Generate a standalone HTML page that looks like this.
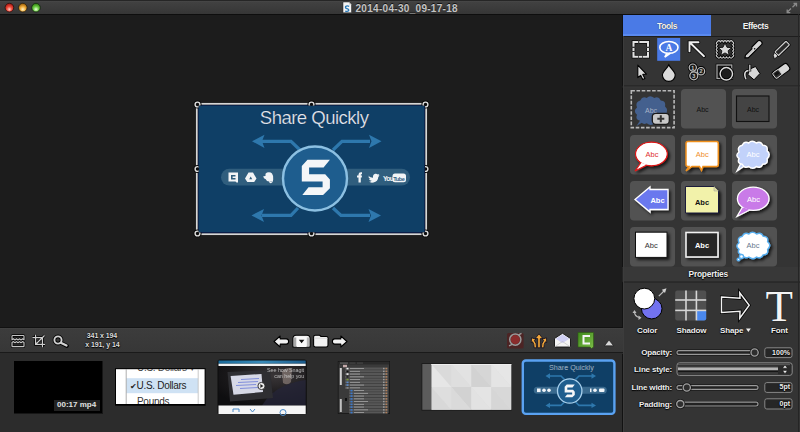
<!DOCTYPE html>
<html><head><meta charset="utf-8">
<style>
*{margin:0;padding:0;box-sizing:border-box}
html,body{width:800px;height:432px;overflow:hidden;background:#1c1c1c;font-family:"Liberation Sans",sans-serif}
.a{position:absolute;white-space:nowrap}
#title{left:0;top:0;width:800px;height:15px;background:linear-gradient(#262626 0,#262626 1px,#4a4a4a 1px,#414141 2px,#363636 14px);border-bottom:1px solid #0e0e0e}
#ttext{left:355.5px;top:3px;font-size:10px;line-height:11px;color:#c4c4c4;font-weight:bold;letter-spacing:.3px;text-shadow:0 -1px 0 #111}
#panel{left:622px;top:15px;width:178px;height:417px;background:#343434;border-left:1px solid #121212}
#tabT{left:623px;top:15px;width:88px;height:21px;background:linear-gradient(#4a7ae6 0,#4a7ae6 19px,#5a8af0 19px);color:#f4f4f4;font-size:8.6px;letter-spacing:-.45px;font-weight:bold;text-align:center;line-height:22.5px;text-shadow:0 0 1px #222}
#tabE{left:711px;top:15px;width:89px;height:21px;background:#363636;color:#f4f4f4;font-size:8.6px;letter-spacing:-.45px;font-weight:bold;text-align:center;line-height:22.5px;text-shadow:0 0 1px #000}
#toolbar{left:0;top:327px;width:623px;height:27px;background:linear-gradient(#111 0,#111 1px,#454545 1px,#3c3c3c 2px,#373737 25px,#1a1a1a 25px,#1a1a1a 26px,#2c2c2c 26px)}
#strip{left:0;top:353px;width:622px;height:79px;background:#2c2c2c}
#svg{left:0;top:0}
.lbl{font-size:8px;font-weight:bold;color:#eee;text-shadow:0 0 1.5px #000,0 1px 1px #000}
</style></head><body>
<div id="title" class="a"></div>
<div id="ttext" class="a">2014-04-30_09-17-18</div>
<div id="panel" class="a"></div>
<div id="tabT" class="a">Tools</div>
<div id="tabE" class="a">Effects</div>
<div id="toolbar" class="a"></div>
<div id="strip" class="a"></div>

<svg id="svg" class="a" width="800" height="432" viewBox="0 0 800 432">
<defs>
 <radialGradient id="gr" cx="50%" cy="70%" r="60%"><stop offset="0" stop-color="#ffd0c8"/><stop offset=".5" stop-color="#f04a3a"/><stop offset="1" stop-color="#b02018"/></radialGradient>
 <radialGradient id="gy" cx="50%" cy="70%" r="60%"><stop offset="0" stop-color="#fff4c8"/><stop offset=".5" stop-color="#f2b040"/><stop offset="1" stop-color="#a86a10"/></radialGradient>
 <radialGradient id="gg" cx="50%" cy="70%" r="60%"><stop offset="0" stop-color="#f0ffe0"/><stop offset=".5" stop-color="#70d048"/><stop offset="1" stop-color="#3a8a18"/></radialGradient>
</defs>
<!-- traffic lights -->
<circle cx="9.4" cy="7.6" r="4.3" fill="url(#gr)" stroke="#1a0a0a" stroke-width=".7"/>
<circle cx="22.8" cy="7.6" r="4.3" fill="url(#gy)" stroke="#1a140a" stroke-width=".7"/>
<circle cx="36" cy="7.6" r="4.3" fill="url(#gg)" stroke="#0a1a0a" stroke-width=".7"/>

<!-- fullscreen -->
 <path d="M792.5,7.2 L796,3.7 M793.5,3.5 H796.5 V6.5" fill="none" stroke="#8a8a8a" stroke-width="1.3"/>
 <path d="M791,8.5 L787.5,12 M787.2,9.5 V12.6 H790.3" fill="none" stroke="#8a8a8a" stroke-width="1.3"/>
 <line x1="623" y1="36.5" x2="800" y2="36.5" stroke="#1e1e1e" stroke-width="1"/>
<!-- doc icon -->
 <path d="M343,2 H349 L351.5,4.5 V12.7 H343Z" fill="#f4f4f4" stroke="#222" stroke-width=".5"/>
 <path d="M349,2 V4.5 H351.5" fill="#ccc"/>
 <path d="M349.2,6.3 Q347,5.2 345.6,6.5 Q345,8 347,8.6 Q349.2,9.3 348.6,10.8 Q347.2,12 345.2,11" fill="none" stroke="#2a7ab8" stroke-width="1.3"/>
<!-- ===== canvas image ===== -->
<g id="canvasimg">
 <rect x="198" y="105" width="227" height="128" fill="#0f3f66"/>
 <rect x="198" y="232" width="227" height="1.5" fill="#0a1d4a"/>
 <g fill="none" stroke="#2e78ad" stroke-width="3.2" stroke-linejoin="miter">
  <polyline points="262,141.3 291,141.3 300,150"/>
  <polyline points="370,141.3 342,141.3 333,150"/>
  <polyline points="262,215.4 291,215.4 298,208"/>
  <polyline points="370,215.4 341,215.4 333,208"/>
 </g>
 <g fill="#2e78ad">
  <polygon points="252,141.3 264.5,134.8 262,141.3 264.5,148"/>
  <polygon points="381.5,141.3 369,134.8 371.5,141.3 369,148"/>
  <polygon points="251.5,215.4 264,209 261.5,215.4 264,222"/>
  <polygon points="381,215.4 368.5,209 371,215.4 368.5,222"/>
 </g>
 <rect x="221" y="168.8" width="189" height="16.8" rx="8.4" fill="#305e7e"/>
<!-- social -->
 <g fill="#f2f4f6">
  <path d="M228.5,172.5 H238 V182.5 H236.5 L235.5,181.5 H228.5Z M231,175 V179.5 H235.5 V178 H232.6 V176.5 H235.5 V175Z" fill-rule="evenodd"/>
  <path d="M248.5,172.5 H253 L256.5,178.5 L254.2,182 H247.3 L245,178.5Z M250.7,176.5 L249.2,179.3 H252.2Z" fill-rule="evenodd"/>
  <path d="M265.5,173.8 L267,172.5 Q270.5,171.8 272,173.5 Q273.8,176 273.2,179.5 Q272.8,183 270.6,183.2 Q269,183.2 269.2,181.5 Q266.5,181.5 265.8,179.2 Q263.5,178.6 263.2,176.3 L265.5,176Z"/><path d="M270.6,181.5 Q271.5,181.2 271.5,182.2" fill="none" stroke="#305e7e" stroke-width=".6"/>
  <path d="M358.5,182.5 V177.5 H357 V175.5 H358.5 V174.5 Q358.5,172.2 361,172.2 H362 V174.2 H361.3 Q360.8,174.2 360.8,174.8 V175.5 H362 L361.8,177.5 H360.8 V182.5Z"/>
  <path d="M368,175.5 Q370.5,177.8 373,177.8 Q372.6,174.5 375.3,173.8 Q377,173.6 377.8,174.6 L379.3,174 L378.5,175.4 L379.5,175.2 Q379,176.5 378.3,177 Q378,181.5 373.5,182.5 Q370.5,183 368.5,181.6 Q370.5,181.8 371.7,180.8 Q369.5,180.5 369,179 L370.3,179 Q368.4,178.2 368.5,176.6 L369.6,177 Q368.2,175.8 368,175.5Z"/>
  <rect x="392.5" y="173.5" width="13.5" height="8.8" rx="2.5"/>
 </g>
 <text x="383" y="181" font-size="6.8" font-weight="bold" fill="#f2f4f6" letter-spacing="-0.7">You</text>
 <text x="393.3" y="180.6" font-size="5.6" font-weight="bold" fill="#305e7e" letter-spacing="-0.5">Tube</text>
 <circle cx="315" cy="178.5" r="32" fill="#1e5d8e" stroke="#8cc0e2" stroke-width="2.4"/>
 <polygon fill="#f4f6f8" points="307.5,159.7 329.9,159.7 323.6,167.5 309.1,167.5 309.1,174.3 325.2,174.3 329.9,179.5 329.9,188.3 323.1,195.1 302.3,195.1 308.5,187.3 322.6,187.3 322.6,181.6 301.8,181.6 301.8,165.9"/>
</g>

<!-- ===== tools icons ===== -->
<g id="tools">
 <rect x="657.2" y="38" width="23" height="22.8" fill="#4a7ae6"/>
 <line x1="622.5" y1="86" x2="800" y2="86" stroke="#1e1e1e" stroke-width="1"/>
 <line x1="622.5" y1="87" x2="800" y2="87" stroke="#383838" stroke-width="1"/>
 <!-- dashed rect -->
 <g fill="none" stroke-linecap="butt">
  <g stroke="#000" stroke-width="3.6" opacity=".85">
   <path d="M633.5,46.8V42H638.2M643.3,42H639.3M642.8,42H648V46.8M648,47.9V50.9M648,52V56.8H643M642.3,56.8H638.9M638.2,56.8H633.5V52M633.5,50.9V47.9"/>
  </g>
  <g stroke="#e2e2e2" stroke-width="2.1">
   <path d="M633.5,46.8V42H638.2M643.3,42H639.3M642.8,42H648V46.8M648,47.9V50.9M648,52V56.8H643M642.3,56.8H638.9M638.2,56.8H633.5V52M633.5,50.9V47.9"/>
  </g>
 </g>
 <!-- callout -->
 <g fill="none" stroke="#fff" stroke-width="1.6">
  <ellipse cx="668.9" cy="47.4" rx="9.1" ry="5.9"/>
  <path d="M667,53.2 L664.8,57.2 L670.5,53"/>
 </g>
 <text x="668.9" y="51.4" font-family="Liberation Serif" font-weight="bold" font-size="9.5" fill="#fff" text-anchor="middle">A</text>
 <!-- arrow -->
 <g fill="none" stroke-linecap="round" stroke-linejoin="miter">
  <path d="M689.5,51.2V42.2H698.5M689.8,42.5L704,56.2" stroke="#000" stroke-width="3.6" opacity=".9"/>
  <path d="M689.5,51.2V42.2H698.5M689.8,42.5L704,56.2" stroke="#eee" stroke-width="1.9"/>
 </g>
 <!-- stamp -->
 <g fill="none">
  <path d="M717.4,41.8 Q718.92,39.60 720.44,41.80 Q721.96,39.60 723.48,41.80 Q725.00,39.60 726.52,41.80 Q728.04,39.60 729.56,41.80 Q731.08,39.60 732.60,41.80 Q734.80,43.32 732.60,44.84 Q734.80,46.36 732.60,47.88 Q734.80,49.40 732.60,50.92 Q734.80,52.44 732.60,53.96 Q734.80,55.48 732.60,57.00 Q731.08,59.20 729.56,57.00 Q728.04,59.20 726.52,57.00 Q725.00,59.20 723.48,57.00 Q721.96,59.20 720.44,57.00 Q718.92,59.20 717.40,57.00 Q715.20,55.48 717.40,53.96 Q715.20,52.44 717.40,50.92 Q715.20,49.40 717.40,47.88 Q715.20,46.36 717.40,44.84 Q715.20,43.32 717.40,41.80Z" stroke="#000" stroke-width="2.8"/>
  <path d="M717.4,41.8 Q718.92,39.60 720.44,41.80 Q721.96,39.60 723.48,41.80 Q725.00,39.60 726.52,41.80 Q728.04,39.60 729.56,41.80 Q731.08,39.60 732.60,41.80 Q734.80,43.32 732.60,44.84 Q734.80,46.36 732.60,47.88 Q734.80,49.40 732.60,50.92 Q734.80,52.44 732.60,53.96 Q734.80,55.48 732.60,57.00 Q731.08,59.20 729.56,57.00 Q728.04,59.20 726.52,57.00 Q725.00,59.20 723.48,57.00 Q721.96,59.20 720.44,57.00 Q718.92,59.20 717.40,57.00 Q715.20,55.48 717.40,53.96 Q715.20,52.44 717.40,50.92 Q715.20,49.40 717.40,47.88 Q715.20,46.36 717.40,44.84 Q715.20,43.32 717.40,41.80Z" stroke="#c8c8c8" stroke-width="1.2"/>
 </g>
 <polygon points="725,43 727,47.3 731.6,47.7 728.1,50.8 729.2,55.3 725,52.9 720.8,55.3 721.9,50.8 718.4,47.7 723,47.3" fill="#d8d8d8" stroke="#000" stroke-width=".8" stroke-linejoin="round"/>
 <!-- pen -->
 <g transform="translate(752.8,49.7) rotate(-44.5)">
  <path d="M-11.3,0.3 L-9,-1.3 H0 L1.2,-2.6 H9.8 Q11.8,-2.6 11.8,0 Q11.8,2.6 9.8,2.6 H-9 Z" fill="#d6d6d6" stroke="#000" stroke-width="1.1"/>
  <line x1="-8" y1="0" x2="0" y2="0" stroke="#999" stroke-width=".6"/>
  <circle cx="2" cy="0.6" r=".8" fill="#111"/>
 </g>
 <!-- highlighter -->
 <g transform="translate(782.2,48.4) rotate(-44)">
  <rect x="-7.8" y="-2.5" width="15.6" height="5" rx=".9" fill="#2a2a2a" stroke="#000" stroke-width="2.8"/>
  <rect x="-7.8" y="-2.5" width="15.6" height="5" rx=".9" fill="#2a2a2a" stroke="#cdcdcd" stroke-width="1.3"/>
  <path d="M-8.4,-2.4 L-11.2,-1.2 L-13,2.2 L-8.4,2.6Z" fill="#dcdcdc" stroke="#000" stroke-width=".7"/>
 </g>
 <!-- cursor -->
 <path d="M637.8,65.2 L637.8,77.6 L640.6,75.3 L642.7,79.6 L644.9,78.6 L642.8,74.4 L646.4,74.2Z" fill="#dadada" stroke="#000" stroke-width="1.1" stroke-linejoin="round"/>
 <!-- drop -->
 <path d="M668.8,64.8 C670.4,68.5 675.2,71.2 675.2,75 A6.4,6.4 0 0 1 662.4,75 C662.4,71.2 667.2,68.5 668.8,64.8Z" fill="#dadada" stroke="#000" stroke-width="1.1"/>
 <!-- step numbers -->
 <g fill="#1a1a1a" stroke="#000" stroke-width="2.8">
  <circle cx="701" cy="71.2" r="3.7"/><circle cx="692.8" cy="67.6" r="3.6"/><circle cx="693.8" cy="75.8" r="4"/>
 </g>
 <g fill="#1a1a1a" stroke="#bdbdbd" stroke-width="1.2">
  <circle cx="701" cy="71.2" r="3.7"/>
  <circle cx="692.8" cy="67.6" r="3.6"/>
  <circle cx="693.8" cy="75.8" r="4"/>
 </g>
 <g font-family="Liberation Sans" font-weight="bold" font-size="5.5" fill="#c8c8c8" text-anchor="middle">
  <text x="692.8" y="69.6">1</text><text x="701.1" y="73.2">2</text><text x="693.8" y="77.8">3</text>
 </g>
 <!-- crop circle -->
 <rect x="717" y="65" width="14.8" height="13.4" fill="#1e1e1e" stroke="#000" stroke-width="2.6"/>
 <rect x="717" y="65" width="14.8" height="13.4" fill="none" stroke="#a8a8a8" stroke-width="1.3"/>
 <circle cx="726.3" cy="73.8" r="6.2" fill="#1e1e1e" stroke="#000" stroke-width="3"/>
 <circle cx="726.3" cy="73.8" r="6.2" fill="none" stroke="#dcdcdc" stroke-width="1.5"/>
 <!-- bucket -->
 <g>
  <path d="M750,69 L755.5,66.5 L760,73.5 L754,79.8 L747.8,74.5Z" fill="#d8d8d8" stroke="#000" stroke-width="1"/>
  <line x1="749.8" y1="64.3" x2="749.8" y2="71.5" stroke="#000" stroke-width="2.8"/>
  <line x1="749.8" y1="64.8" x2="749.8" y2="71.5" stroke="#c8c8c8" stroke-width="1.4"/>
  <path d="M748.5,70.5 Q744.5,71 744.8,75 Q745,77.5 746,79" fill="none" stroke="#000" stroke-width="3"/>
  <path d="M748.5,70.5 Q744.5,71 744.8,75 Q745,77.5 746,79" fill="none" stroke="#d8d8d8" stroke-width="1.6"/>
 </g>
 <!-- eraser -->
 <g transform="translate(781,71.2) rotate(-36)">
  <rect x="-9.2" y="-4.1" width="18.4" height="8.2" rx="2.6" fill="#d8d8d8" stroke="#000" stroke-width="1.1"/>
  <rect x="-8.4" y="-3.3" width="7.4" height="6.6" rx="1.4" fill="#2e2e2e" stroke="#d0d0d0" stroke-width=".9"/>
  <rect x="-6.8" y="-1.8" width="4.2" height="2.8" fill="#111"/>
 </g>
</g>
</g>

<!-- ===== styles grid ===== -->
<g id="grid">
 <defs>
  <filter id="sh" x="-30%" y="-30%" width="160%" height="160%"><feGaussianBlur in="SourceAlpha" stdDeviation="1.6"/><feOffset dx="1.5" dy="2" result="b"/><feFlood flood-color="#000" flood-opacity=".75"/><feComposite in2="b" operator="in"/><feMerge><feMergeNode/><feMergeNode in="SourceGraphic"/></feMerge></filter>
  <path id="cloud" d="M0,8 q-2,-5 3,-6 q2,-4 6,-2 q3,-3 7,0 q4,-2 6,2 q5,0 4,5 q4,3 0,7 q1,5 -4,5 q-2,4 -6,2 q-3,3 -7,0 q-4,2 -6,-2 q-5,-1 -3,-5 q-4,-3 0,-6z"/>
 </defs>
 <rect x="681" y="89" width="45" height="39.5" rx="4" fill="#525252"/>
 <rect x="732" y="89" width="45" height="39.5" rx="4" fill="#525252"/>
 <rect x="630" y="135" width="45" height="39.5" rx="4" fill="#525252"/>
 <rect x="681" y="135" width="45" height="39.5" rx="4" fill="#525252"/>
 <rect x="732" y="135" width="45" height="39.5" rx="4" fill="#525252"/>
 <rect x="630" y="181" width="45" height="39.5" rx="4" fill="#525252"/>
 <rect x="681" y="181" width="45" height="39.5" rx="4" fill="#525252"/>
 <rect x="732" y="181" width="45" height="39.5" rx="4" fill="#525252"/>
 <rect x="630" y="227" width="45" height="39.5" rx="4" fill="#525252"/>
 <rect x="681" y="227" width="45" height="39.5" rx="4" fill="#525252"/>
 <rect x="732" y="227" width="45" height="39.5" rx="4" fill="#525252"/>
 <!-- cell1 dashed -->
 <rect x="631.3" y="90.8" width="42.8" height="36.8" fill="none" stroke="#b8b8b8" stroke-width="1.6" stroke-dasharray="3.6 1.6"/>
 <g fill="#44608e">
  <use href="#cloud" transform="translate(637,98) scale(1.08,1.2)"/>
  <path d="M643,116 L636.5,126 L648,119Z"/>
 </g>
 <text x="651" y="112.5" font-size="7" fill="#a8b4c8" text-anchor="middle">Abc</text>
 <rect x="652.3" y="113.3" width="17" height="11" rx="3.5" fill="#c8c8c8" stroke="#1a1a1a" stroke-width="1.3"/>
 <path d="M660.8,115.3V122.3M657.3,118.8H664.3" stroke="#333" stroke-width="2"/>
 <!-- cell2 -->
 <text x="702.5" y="111.5" font-size="7" fill="#111" text-anchor="middle">Abc</text>
 <!-- cell3 -->
 <rect x="736.5" y="96" width="32.5" height="25.5" fill="#444" stroke="#111" stroke-width="1.1"/>
 <text x="753" y="111.5" font-size="7" fill="#111" text-anchor="middle">Abc</text>
 <!-- cell4 red oval -->
 <g filter="url(#sh)">
  <ellipse cx="651.4" cy="154" rx="15.8" ry="11.8" fill="#fff" stroke="#e01818" stroke-width="1.3"/>
  <path d="M641,162.5 L635,171 L647,165" fill="#fff" stroke="#e01818" stroke-width="1.3"/>
  <ellipse cx="651.4" cy="154" rx="15" ry="11" fill="#fff"/>
 </g>
 <text x="652" y="157" font-size="7.5" fill="#e03030" text-anchor="middle">Abc</text>
 <!-- cell5 orange rect -->
 <g filter="url(#sh)">
  <path d="M688,141.5 H716.5 Q718.3,141.5 718.3,143.5 V164.5 Q718.3,166.5 716.5,166.5 H703 L701.5,170.5 L699.5,166.5 H692 L686,171 L689,166.5 H688 Q686,166.5 686,164.5 V143.5 Q686,141.5 688,141.5Z" fill="#fff" stroke="#f0901c" stroke-width="1.5"/>
 </g>
 <text x="702.3" y="157" font-size="7.5" fill="#f0902c" text-anchor="middle">Abc</text>
 <!-- cell6 blue cloud -->
 <g filter="url(#sh)">
  <g fill="#c2d2fa" stroke="#fff" stroke-width="1.3">
   <path d="M742,161 L737,171 L748,163.5Z"/>
   <use href="#cloud" transform="translate(739,143) scale(1.08,1.12)"/>
  </g>
 </g>
 <text x="753" y="157" font-size="7.5" fill="#fff" text-anchor="middle">Abc</text>
 <!-- cell7 blue arrow -->
 <g filter="url(#sh)">
  <path d="M635,199.4 L650,187 V189.5 H668 V209.5 H650 V212 Z" fill="#6b78ee" stroke="#fff" stroke-width="1.3" stroke-linejoin="miter"/>
 </g>
 <text x="657.5" y="202.5" font-size="7.5" font-weight="bold" fill="#fff" text-anchor="middle">Abc</text>
 <!-- cell8 yellow note -->
 <g filter="url(#sh)">
  <path d="M685.5,186.5 H714 L718.5,191 V213 H685.5Z" fill="#f2f2aa" stroke="#1a1a3a" stroke-width="1"/>
  <path d="M714,186.5 V191 H718.5" fill="#e0e0a0" stroke="#999" stroke-width=".5"/>
 </g>
 <text x="702" y="204.5" font-size="7.5" font-weight="bold" fill="#111" text-anchor="middle">Abc</text>
 <!-- cell9 purple oval -->
 <g filter="url(#sh)">
  <path d="M742.5,207 L737,216.5 L749.5,210Z" fill="#c97ae8" stroke="#fff" stroke-width="1.3"/>
  <ellipse cx="753.2" cy="198.8" rx="15.8" ry="11.6" fill="#c97ae8" stroke="#fff" stroke-width="1.3"/>
  <path d="M743.5,207.5 L739,214.5 L749,209.5Z" fill="#c97ae8"/>
 </g>
 <text x="753.5" y="202" font-size="7.5" fill="#fff" text-anchor="middle">Abc</text>
 <!-- cell10 white rect -->
 <g filter="url(#sh)"><rect x="635.5" y="232.2" width="31.5" height="25.2" fill="#fff" stroke="#111" stroke-width="1"/></g>
 <text x="651.3" y="247.5" font-size="7.5" fill="#333" text-anchor="middle">Abc</text>
 <!-- cell11 black rect -->
 <g filter="url(#sh)"><rect x="686" y="232.5" width="32" height="24.5" fill="#262626" stroke="#f2f2f2" stroke-width="1.6"/></g>
 <text x="702" y="247.5" font-size="7.5" font-weight="bold" fill="#fff" text-anchor="middle">Abc</text>
 <!-- cell12 white cloud -->
 <g filter="url(#sh)">
  <g fill="#fff" stroke="#5ab0f0" stroke-width="1.3">
   <use href="#cloud" transform="translate(739,234) scale(1.1,1.1)"/>
   <circle cx="741.5" cy="256.5" r="2"/><circle cx="738.5" cy="259.5" r="1.4"/>
  </g>
 </g>
 <text x="753" y="248" font-size="7.5" fill="#6a7a90" text-anchor="middle">Abc</text>
 <line x1="622.5" y1="267.5" x2="800" y2="267.5" stroke="#1e1e1e" stroke-width="1"/>
</g>

<!-- ===== properties ===== -->
<g id="props">
 <rect x="622.5" y="267" width="178" height="15" fill="#383838"/>
 <line x1="622.5" y1="282" x2="800" y2="282" stroke="#1f1f1f" stroke-width="1"/>
 <line x1="798.5" y1="14" x2="798.5" y2="432" stroke="#252525" stroke-width="1"/>
 <line x1="623.5" y1="36" x2="623.5" y2="432" stroke="#3c3c3c" stroke-width="1"/>
 <!-- color -->
 <circle cx="651.7" cy="308.6" r="10.3" fill="#7272f0" stroke="#000" stroke-width="1"/>
 <circle cx="644.3" cy="298.6" r="10.4" fill="#fff" stroke="#000" stroke-width="1"/>
 <g stroke="#bdbdbd" stroke-width="1.2" fill="none">
  <line x1="658.8" y1="296.2" x2="664.5" y2="290.5"/>
  <path d="M634.5,311.5 Q634.5,316.5 639.5,317.5"/>
 </g>
 <path d="M666.5,288.3 L661.8,289.8 L665,293Z" fill="#cfcfcf"/>
 <path d="M641.5,317.8 L638.5,315.5 L638.5,320Z" fill="#bdbdbd"/>
 <path d="M634.5,310 L632.5,313 L636.5,313Z" fill="#bdbdbd"/>
 <!-- shadow -->
 <rect x="675.2" y="290.6" width="31" height="29.8" rx="2" fill="#505050"/>
 <path d="M697,311 H706.2 V318.4 Q706.2,320.4 704.2,320.4 H697Z" fill="#4a88ee"/>
 <g stroke="#d6d6d6" stroke-width="1.6">
  <line x1="686" y1="290.6" x2="686" y2="320.4"/>
  <line x1="696.4" y1="290.6" x2="696.4" y2="320.4"/>
  <line x1="675.2" y1="300" x2="706.2" y2="300"/>
  <line x1="675.2" y1="310.4" x2="706.2" y2="310.4"/>
 </g>
 <!-- shape arrow -->
 <path d="M721.5,297 L740,298.3 L739.8,292.8 L749.2,305.3 L739.8,318.2 L740,311.2 L721.5,312.5Z" fill="none" stroke="#000" stroke-width="3" stroke-linejoin="miter"/>
 <path d="M721.5,297 L740,298.3 L739.8,292.8 L749.2,305.3 L739.8,318.2 L740,311.2 L721.5,312.5Z" fill="none" stroke="#f2f2f2" stroke-width="1.5" stroke-linejoin="miter"/>
 <path d="M746,328.5 H750.8 L748.4,332Z" fill="#eee"/>
 <!-- sliders -->
 <g stroke="#111" stroke-width="2.6" fill="none" opacity=".7">
  <rect x="677" y="350.6" width="81" height="3.8" rx="1.9"/>
  <rect x="677" y="385.6" width="81" height="3.8" rx="1.9"/>
  <rect x="677" y="402.2" width="81" height="3.8" rx="1.9"/>
 </g>
 <g stroke="#999" stroke-width="1.2" fill="#222">
  <rect x="677" y="350.6" width="81" height="3.8" rx="1.9"/>
  <rect x="677" y="385.6" width="81" height="3.8" rx="1.9"/>
  <rect x="677" y="402.2" width="81" height="3.8" rx="1.9"/>
 </g>
 <g fill="none" stroke="#111" stroke-width="3" opacity=".8">
  <circle cx="754.6" cy="352.5" r="3.6"/><circle cx="686.8" cy="387.5" r="3.6"/><circle cx="680.3" cy="404.1" r="3.6"/>
 </g>
 <g fill="#2e2e2e" stroke="#a0a0a0" stroke-width="1.3">
  <circle cx="754.6" cy="352.5" r="3.6"/>
  <circle cx="686.8" cy="387.5" r="3.6"/>
  <circle cx="680.3" cy="404.1" r="3.6"/>
 </g>
 <!-- line style -->
 <rect x="677" y="362.8" width="115.2" height="12.6" rx="2.5" fill="#2a2a2a" stroke="#8a8a8a" stroke-width="1"/>
 <rect x="678" y="363.6" width="112" height="1.6" fill="#565656"/>
 <rect x="678" y="366" width="100" height="1" fill="#3a3a3a"/>
 <rect x="678" y="367.4" width="100" height="3" fill="#b4b4b4"/>
 <rect x="678" y="370.6" width="100" height="1.3" fill="#151515"/>
 <rect x="678" y="372.2" width="100" height="2.2" fill="#3c3c3c"/>
 <path d="M782.5,368.2 L785,364.9 L787.5,368.2Z M782.5,370.4 L785,373.7 L787.5,370.4Z" fill="#eee" stroke="#000" stroke-width=".5"/>
 <!-- value boxes -->
 <g fill="#262626" stroke="#888" stroke-width="1">
  <rect x="764.8" y="347.8" width="27.2" height="9.8" rx="2"/>
  <rect x="764.8" y="382.6" width="27.2" height="9.8" rx="2"/>
  <rect x="764.8" y="398.8" width="27.2" height="10.2" rx="2"/>
 </g>
</g>

<!-- ===== bottom toolbar ===== -->
<g id="btool">
 <!-- torn edge icon -->
 <g stroke-linejoin="round">
  <path d="M12,339.8 V336.2 Q12,335.5 12.7,335.5 H23.3 Q24,335.5 24,336.2 V339.8 L22.5,338.8 L21,340 L19.5,338.8 L18,340 L16.5,338.8 L15,340 L13.5,338.8Z" fill="#2a2a2a" stroke="#000" stroke-width="2.6"/>
  <path d="M12,342.6 V346 Q12,346.7 12.7,346.7 H23.3 Q24,346.7 24,346 V342.6 L22.5,341.6 L21,342.8 L19.5,341.6 L18,342.8 L16.5,341.6 L15,342.8 L13.5,341.6Z" fill="#2a2a2a" stroke="#000" stroke-width="2.6"/>
  <path d="M12,339.8 V336.2 Q12,335.5 12.7,335.5 H23.3 Q24,335.5 24,336.2 V339.8 L22.5,338.8 L21,340 L19.5,338.8 L18,340 L16.5,338.8 L15,340 L13.5,338.8Z" fill="none" stroke="#c4c4c4" stroke-width="1.2"/>
  <path d="M12,342.6 V346 Q12,346.7 12.7,346.7 H23.3 Q24,346.7 24,346 V342.6 L22.5,341.6 L21,342.8 L19.5,341.6 L18,342.8 L16.5,341.6 L15,342.8 L13.5,341.6Z" fill="none" stroke="#c4c4c4" stroke-width="1.2"/>
 </g>
 <!-- crop -->
 <g fill="none" stroke="#000" stroke-width="2.6">
  <path d="M32.5,337.6 H42.4 V347.2 M35.6,334.8 V344.4 H45 M36,344 L44.5,335.5"/>
 </g>
 <g fill="none" stroke="#cfcfcf" stroke-width="1.2">
  <path d="M32.5,337.6 H42.4 V347.2 M35.6,334.8 V344.4 H45 M36,344 L44.5,335.5"/>
 </g>
 <!-- magnifier -->
 <circle cx="58" cy="340" r="3.6" fill="none" stroke="#000" stroke-width="3.6"/>
 <line x1="60.8" y1="342.8" x2="67" y2="346" stroke="#000" stroke-width="3.8" stroke-linecap="round"/>
 <circle cx="58" cy="340" r="3.6" fill="none" stroke="#d2d2d2" stroke-width="1.9"/>
 <line x1="60.8" y1="342.8" x2="66.5" y2="345.6" stroke="#d2d2d2" stroke-width="2.2" stroke-linecap="round"/>
 <!-- center nav -->
 <g stroke="#000" stroke-width="1.1" fill="#f2f2f2" stroke-linejoin="round">
  <path d="M274,341.5 L280.2,336 V338.9 H286.3 Q288.6,338.9 288.6,341.5 Q288.6,344.1 286.3,344.1 H280.2 V347Z"/>
  <path d="M347,341.5 L340.8,336 V338.9 H334.7 Q332.4,338.9 332.4,341.5 Q332.4,344.1 334.7,344.1 H340.8 V347Z"/>
  <path d="M293,338.5 Q293,335.2 296,335.2 H307 Q310,335.2 310,338.5 V347 H293Z"/>
  <path d="M313.6,337 Q313.6,335.2 315.4,335.2 H319.5 L321,336.5 H326.3 Q328,336.5 328,338.2 V345.3 Q328,347 326.3,347 H315.4 Q313.6,347 313.6,345.3Z"/>
 </g>
 <rect x="293.6" y="337.5" width="2.8" height="9" fill="#a8a8a8"/>
 <rect x="306.6" y="337.5" width="2.8" height="9" fill="#b8b8b8"/>
 <rect x="296.6" y="337" width="10" height="10" fill="#fafafa"/>
 <path d="M298.8,339.8 H304.4 L301.6,343.2Z" fill="#111"/>
 <line x1="313.8" y1="338.2" x2="327.8" y2="338.2" stroke="#ccc" stroke-width=".6"/>
 <!-- right icons -->
 <rect x="507" y="333" width="16.6" height="15.4" rx="1.5" fill="#4c2424"/>
 <circle cx="515.3" cy="339.6" r="4.6" fill="#8a2c2c"/>
 <circle cx="515.3" cy="339.6" r="5.6" fill="none" stroke="#9a9a9a" stroke-width="1.5"/>
 <path d="M518.5,334.8 L521.5,333.3 M512.1,344.4 L509,345.9" stroke="#9a9a9a" stroke-width="1.3"/>
 <g stroke="#0a0a20" stroke-width=".8" fill="#f4a83a" stroke-linejoin="round">
  <path d="M539,333.8 L542.8,338.6 L540.3,338.6 V347.8 H537.7 V338.6 H535.2Z"/>
  <path d="M531.5,337.8 L535.8,339.2 L534.3,340.4 Q536.6,343 536.6,347.8 H534.2 Q534.2,344 532.6,341.8 L531.3,342.6Z"/>
  <path d="M546.5,337.8 L542.2,339.2 L543.7,340.4 Q541.4,343 541.4,347.8 H543.8 Q543.8,344 545.4,341.8 L546.7,342.6Z"/>
 </g>
 <path d="M554.5,338.5 L562.5,333.3 L570.5,338.5 V347 H554.5Z" fill="#f4f4f4" stroke="#111" stroke-width=".9"/>
 <path d="M555.6,338.8 L562.5,334.4 L569.4,338.8 L562.5,343Z" fill="#d0d0f4"/>
 <path d="M554.5,347 L562.5,341.5 L570.5,347" fill="none" stroke="#bbb" stroke-width=".6"/>
 <defs><linearGradient id="cam" x1="0" y1="0" x2="1" y2="1"><stop offset="0" stop-color="#3f8a1c"/><stop offset="1" stop-color="#7cbc48"/></linearGradient></defs>
 <path d="M578,332.5 H593.5 V347 L591.5,348.5 L590,347 H578Z" fill="url(#cam)" stroke="#2c5a10" stroke-width=".6"/>
 <path d="M590,336 H583.5 V343.5 H590" fill="none" stroke="#f4f4f4" stroke-width="2"/>
 <path d="M604.5,345.8 L609,340 L613.5,345.8Z" fill="#d8d8d8" stroke="#111" stroke-width=".6"/>
</g>
<!-- ===== thumbnails ===== -->
<g id="thumbs">
 <rect x="14" y="361" width="89" height="53" fill="#161616"/>
 <rect x="14" y="361" width="88" height="52" fill="#000"/>
 <rect x="54" y="400" width="46" height="11" fill="#222"/>
 <!-- dollars -->
 <rect x="115" y="368.2" width="90.6" height="37.5" fill="#000"/>
 <rect x="116" y="369.2" width="88.6" height="34.8" fill="#fff"/>
 <rect x="126.3" y="378.2" width="71.8" height="15" fill="#cfe2f4"/>
 <line x1="126.2" y1="369" x2="126.2" y2="404" stroke="#999" stroke-width=".8"/>
 <line x1="198.2" y1="369" x2="198.2" y2="404" stroke="#bbb" stroke-width=".8"/>
 <!-- video -->
 <defs>
  <linearGradient id="vbar" x1="0" x2="1"><stop offset="0" stop-color="#1a6a9a"/><stop offset=".5" stop-color="#3a8ab8"/><stop offset="1" stop-color="#1a5a8a"/></linearGradient>
  <radialGradient id="vdark" cx="65%" cy="25%" r="80%"><stop offset="0" stop-color="#3a3638"/><stop offset=".6" stop-color="#1c1a1c"/><stop offset="1" stop-color="#0e0e10"/></radialGradient>
 </defs>
 <rect x="217.5" y="359.6" width="89.2" height="55.2" rx="2.5" fill="#0c0c0c"/>
 <rect x="218.5" y="360.5" width="87.2" height="3.2" fill="url(#vbar)"/>
 <rect x="218.5" y="363.7" width="87.2" height="2.3" fill="#f2f2f2"/>
 <rect x="218.5" y="366" width="87.2" height="39.5" fill="url(#vdark)"/>
 <path d="M262,405.5 Q270,392 284,386 Q296,381 305.7,380 V405.5Z" fill="#26263a" opacity=".75"/>
 <path d="M282,371 Q287,366 292,369 L291,382 Q288,386 283,383Z" fill="#9a8a84" opacity=".6"/>
 <polygon points="227.5,372 270,370 273,398 230,401.5" fill="#2e2e32"/>
 <polygon points="230.6,376 261.5,374 263,392 233.5,394.7" fill="#d6d8e6"/>
 <g stroke="#6a7ad8" stroke-width=".8">
  <line x1="241" y1="379.5" x2="259" y2="378.5"/><line x1="238" y1="382.5" x2="258" y2="381.5"/><line x1="236" y1="385.5" x2="256" y2="384.5"/><line x1="240" y1="388.5" x2="258" y2="387.5"/>
 </g>
 <circle cx="261.5" cy="386" r="3.6" fill="#f0f0f0" stroke="#222" stroke-width=".9"/>
 <path d="M260.4,384 L263.4,386 L260.4,388Z" fill="#222"/>
 <rect x="218.5" y="405.5" width="87.2" height="8.6" fill="#f6f6f6"/>
 <g fill="none" stroke="#4a8ac8" stroke-width="1">
  <path d="M233,412 V409 H239 V412"/><path d="M250,409 L252.5,412 L255,409"/><circle cx="283" cy="412.5" r="3"/>
 </g>
 <!-- dark panel -->
 <rect x="337.8" y="361" width="52.2" height="53" fill="#151515"/>
 <rect x="338.6" y="361.8" width="50.6" height="51.4" fill="#3a3a3a"/>
 <rect x="338.6" y="361.8" width="50.6" height="2.6" fill="#2a2a2a"/>
 <rect x="340" y="362.3" width="8" height="1.6" fill="#555"/><rect x="349.5" y="362.5" width="6" height="1.2" fill="#444"/><rect x="357" y="362.5" width="6" height="1.2" fill="#444"/>
 <rect x="343" y="364.8" width="4" height="2.5" fill="#e8c8c8" opacity=".8"/>
 <rect x="345" y="367.5" width="43" height="2.1" fill="#575757"/>
 <rect x="346.5" y="367.8" width="2" height="1.6" fill="#f0f0f0"/>
 <rect x="350" y="368.1" width="14" height="0.9" fill="#bbb" opacity=".7"/>
 <rect x="383" y="367.8" width="1.6" height="1.5" fill="#c8c8c8" opacity=".6"/>
 <rect x="385.5" y="367.8" width="1.6" height="1.5" fill="#d8905a" opacity=".7"/>
 <rect x="345" y="370.2" width="43" height="2.1" fill="#575757"/>
 <rect x="346.5" y="370.6" width="2" height="1.6" fill="#111"/>
 <rect x="350" y="370.9" width="10" height="0.9" fill="#bbb" opacity=".7"/>
 <rect x="383" y="370.6" width="1.6" height="1.5" fill="#c8c8c8" opacity=".6"/>
 <rect x="385.5" y="370.6" width="1.6" height="1.5" fill="#d8905a" opacity=".7"/>
 <rect x="345" y="373.0" width="43" height="2.1" fill="#575757"/>
 <rect x="346.5" y="373.3" width="2" height="1.6" fill="#f0f0f0"/>
 <rect x="350" y="373.6" width="10" height="0.9" fill="#bbb" opacity=".7"/>
 <rect x="383" y="373.3" width="1.6" height="1.5" fill="#c8c8c8" opacity=".6"/>
 <rect x="385.5" y="373.3" width="1.6" height="1.5" fill="#d8905a" opacity=".7"/>
 <rect x="345" y="375.8" width="43" height="2.1" fill="#575757"/>
 <rect x="346.5" y="376.1" width="2" height="1.6" fill="#222"/>
 <rect x="350" y="376.4" width="14" height="0.9" fill="#bbb" opacity=".7"/>
 <rect x="383" y="376.1" width="1.6" height="1.5" fill="#c8c8c8" opacity=".6"/>
 <rect x="385.5" y="376.1" width="1.6" height="1.5" fill="#d8905a" opacity=".7"/>
 <rect x="345" y="378.5" width="43" height="2.1" fill="#575757"/>
 <rect x="346.5" y="378.8" width="2" height="1.6" fill="#7a9a3a"/>
 <rect x="350" y="379.1" width="10" height="0.9" fill="#bbb" opacity=".7"/>
 <rect x="383" y="378.8" width="1.6" height="1.5" fill="#c8c8c8" opacity=".6"/>
 <rect x="385.5" y="378.8" width="1.6" height="1.5" fill="#d8905a" opacity=".7"/>
 <rect x="345" y="381.2" width="43" height="2.1" fill="#575757"/>
 <rect x="346.5" y="381.6" width="2" height="1.6" fill="#5a8aca"/>
 <rect x="350" y="381.9" width="10" height="0.9" fill="#bbb" opacity=".7"/>
 <rect x="383" y="381.6" width="1.6" height="1.5" fill="#c8c8c8" opacity=".6"/>
 <rect x="385.5" y="381.6" width="1.6" height="1.5" fill="#d8905a" opacity=".7"/>
 <rect x="345" y="384.0" width="43" height="2.1" fill="#575757"/>
 <rect x="346.5" y="384.3" width="2" height="1.6" fill="#5a8aca"/>
 <rect x="350" y="384.6" width="14" height="0.9" fill="#bbb" opacity=".7"/>
 <rect x="383" y="384.3" width="1.6" height="1.5" fill="#c8c8c8" opacity=".6"/>
 <rect x="385.5" y="384.3" width="1.6" height="1.5" fill="#d8905a" opacity=".7"/>
 <rect x="345" y="386.8" width="43" height="2.1" fill="#575757"/>
 <rect x="346.5" y="387.1" width="2" height="1.6" fill="#888"/>
 <rect x="350" y="387.4" width="10" height="0.9" fill="#bbb" opacity=".7"/>
 <rect x="383" y="387.1" width="1.6" height="1.5" fill="#c8c8c8" opacity=".6"/>
 <rect x="385.5" y="387.1" width="1.6" height="1.5" fill="#d8905a" opacity=".7"/>
 <rect x="349" y="389.5" width="39" height="2.1" fill="#575757"/>
 <rect x="350.5" y="389.8" width="2" height="1.6" fill="#3a7ad0"/>
 <rect x="354" y="390.1" width="10" height="0.9" fill="#bbb" opacity=".7"/>
 <rect x="383" y="389.8" width="1.6" height="1.5" fill="#c8c8c8" opacity=".6"/>
 <rect x="385.5" y="389.8" width="1.6" height="1.5" fill="#d8905a" opacity=".7"/>
 <rect x="349" y="392.2" width="39" height="2.1" fill="#575757"/>
 <rect x="350.5" y="392.6" width="2" height="1.6" fill="#3a7ad0"/>
 <rect x="354" y="392.9" width="14" height="0.9" fill="#bbb" opacity=".7"/>
 <rect x="383" y="392.6" width="1.6" height="1.5" fill="#c8c8c8" opacity=".6"/>
 <rect x="385.5" y="392.6" width="1.6" height="1.5" fill="#d8905a" opacity=".7"/>
 <rect x="349" y="395.0" width="39" height="2.1" fill="#575757"/>
 <rect x="350.5" y="395.3" width="2" height="1.6" fill="#3a7ad0"/>
 <rect x="354" y="395.6" width="10" height="0.9" fill="#bbb" opacity=".7"/>
 <rect x="383" y="395.3" width="1.6" height="1.5" fill="#c8c8c8" opacity=".6"/>
 <rect x="385.5" y="395.3" width="1.6" height="1.5" fill="#d8905a" opacity=".7"/>
 <rect x="349" y="397.8" width="39" height="2.1" fill="#575757"/>
 <rect x="350.5" y="398.1" width="2" height="1.6" fill="#3a7ad0"/>
 <rect x="354" y="398.4" width="10" height="0.9" fill="#bbb" opacity=".7"/>
 <rect x="383" y="398.1" width="1.6" height="1.5" fill="#c8c8c8" opacity=".6"/>
 <rect x="385.5" y="398.1" width="1.6" height="1.5" fill="#d8905a" opacity=".7"/>
 <rect x="349" y="400.5" width="39" height="2.1" fill="#575757"/>
 <rect x="350.5" y="400.8" width="2" height="1.6" fill="#3a7ad0"/>
 <rect x="354" y="401.1" width="14" height="0.9" fill="#bbb" opacity=".7"/>
 <rect x="383" y="400.8" width="1.6" height="1.5" fill="#c8c8c8" opacity=".6"/>
 <rect x="385.5" y="400.8" width="1.6" height="1.5" fill="#d8905a" opacity=".7"/>
 <rect x="349" y="403.2" width="39" height="2.1" fill="#575757"/>
 <rect x="350.5" y="403.6" width="2" height="1.6" fill="#3a7ad0"/>
 <rect x="354" y="403.9" width="10" height="0.9" fill="#bbb" opacity=".7"/>
 <rect x="383" y="403.6" width="1.6" height="1.5" fill="#c8c8c8" opacity=".6"/>
 <rect x="385.5" y="403.6" width="1.6" height="1.5" fill="#d8905a" opacity=".7"/>
 <rect x="349" y="406.0" width="39" height="2.1" fill="#575757"/>
 <rect x="350.5" y="406.3" width="2" height="1.6" fill="#3a7ad0"/>
 <rect x="354" y="406.6" width="10" height="0.9" fill="#bbb" opacity=".7"/>
 <rect x="383" y="406.3" width="1.6" height="1.5" fill="#c8c8c8" opacity=".6"/>
 <rect x="385.5" y="406.3" width="1.6" height="1.5" fill="#d8905a" opacity=".7"/>
 <rect x="349" y="408.8" width="39" height="2.1" fill="#575757"/>
 <rect x="350.5" y="409.1" width="2" height="1.6" fill="#3a7ad0"/>
 <rect x="354" y="409.4" width="14" height="0.9" fill="#bbb" opacity=".7"/>
 <rect x="383" y="409.1" width="1.6" height="1.5" fill="#c8c8c8" opacity=".6"/>
 <rect x="385.5" y="409.1" width="1.6" height="1.5" fill="#d8905a" opacity=".7"/>
 <rect x="349" y="411.5" width="39" height="2.1" fill="#575757"/>
 <rect x="350.5" y="411.8" width="2" height="1.6" fill="#3a7ad0"/>
 <rect x="354" y="412.1" width="10" height="0.9" fill="#bbb" opacity=".7"/>
 <rect x="383" y="411.8" width="1.6" height="1.5" fill="#c8c8c8" opacity=".6"/>
 <rect x="385.5" y="411.8" width="1.6" height="1.5" fill="#d8905a" opacity=".7"/>
 <rect x="339.8" y="368" width="2" height="17" fill="#d0d0d0"/>
 <rect x="339.8" y="399" width="2" height="13" fill="#c0c0c0"/>
 <rect x="345" y="398" width="2" height="3" fill="#111"/>
 <!-- gray polygons -->
 <rect x="421.5" y="363.2" width="90.2" height="47.4" fill="#1a1a1a"/>
 <svg x="431.3" y="364" width="80" height="45.8" viewBox="431.3 364 80 45.8">
 <rect x="431" y="364" width="81" height="46" fill="#dcdcdc"/>
 <path d="M431.3,364 H451.3 V387Z" fill="#dadada"/>
 <path d="M431.3,364 V387 H451.3Z" fill="#e6e6e6"/>
 <path d="M451.3,364 H471.3 V387Z" fill="#e2e2e2"/>
 <path d="M451.3,364 V387 H471.3Z" fill="#dedede"/>
 <path d="M471.3,364 H491.3 V387Z" fill="#d6d6d6"/>
 <path d="M471.3,364 V387 H491.3Z" fill="#d2d2d2"/>
 <path d="M491.3,364 H511.3 V387Z" fill="#e6e6e6"/>
 <path d="M491.3,364 V387 H511.3Z" fill="#e4e4e4"/>
 <path d="M431.3,387 H451.3 V410Z" fill="#dedede"/>
 <path d="M431.3,387 V410 H451.3Z" fill="#d8d8d8"/>
 <path d="M451.3,387 H471.3 V410Z" fill="#d2d2d2"/>
 <path d="M451.3,387 V410 H471.3Z" fill="#dadada"/>
 <path d="M471.3,387 H491.3 V410Z" fill="#e4e4e4"/>
 <path d="M471.3,387 V410 H491.3Z" fill="#e2e2e2"/>
 <path d="M491.3,387 H511.3 V410Z" fill="#d8d8d8"/>
 <path d="M491.3,387 V410 H511.3Z" fill="#d6d6d6"/>
 </svg>
 <rect x="422.3" y="364" width="9" height="45.8" fill="#5c5c5c"/>
 <rect x="431.3" y="364" width="80" height="1" fill="#eee"/>
 <!-- selected -->
 <rect x="522.8" y="360.5" width="91.6" height="53.4" rx="3" fill="#0f3f66" stroke="#5aa2f2" stroke-width="2.4"/>
 <g fill="none" stroke="#2e78ad" stroke-width="1.6">
  <polyline points="549,376 561,376 564.5,379.5"/>
  <polyline points="592,376 579,376 575.5,379.5"/>
  <polyline points="549,405.4 561,405.4 564.5,402"/>
  <polyline points="592,405.4 579,405.4 575.5,402"/>
 </g>
 <g fill="#2e78ad">
  <path d="M545.5,376 L550,373.3 L550,378.7Z"/><path d="M596,376 L591.5,373.3 L591.5,378.7Z"/>
  <path d="M545.5,405.4 L550,402.7 L550,408.1Z"/><path d="M596,405.4 L591.5,402.7 L591.5,408.1Z"/>
 </g>
 <rect x="533.8" y="386.8" width="73" height="7" rx="3.5" fill="#3a6a8e"/>
 <g fill="#f0f4f8">
  <rect x="537" y="388.5" width="3.6" height="3.6"/><circle cx="544" cy="390.3" r="1.8"/><circle cx="549" cy="390.3" r="1.8"/>
  <rect x="590" y="388.5" width="1.5" height="3.6"/><circle cx="595" cy="390.3" r="1.8"/><rect x="599" y="388.6" width="5.5" height="3.4" rx="1"/>
 </g>
 <circle cx="569.7" cy="391" r="12.2" fill="#1e5d8e" stroke="#a8d0ec" stroke-width="1.3"/>
 <polygon fill="#f4f6f8" transform="translate(569.7,391) scale(0.36) translate(-315.8,-177.5)" points="307.5,159.7 329.9,159.7 323.6,167.5 309.1,167.5 309.1,174.3 325.2,174.3 329.9,179.5 329.9,188.3 323.1,195.1 302.3,195.1 308.5,187.3 322.6,187.3 322.6,181.6 301.8,181.6 301.8,165.9"/>
</g>
<!-- selection -->
<clipPath id="outimg"><path d="M0,0 H800 V432 H0Z M198.5,105.5 V232.5 H425 V105.5Z" clip-rule="evenodd"/></clipPath>
<rect x="198.3" y="105.3" width="226.4" height="127.4" fill="none" stroke="#0a1f48" stroke-width="1"/>
<rect x="196.8" y="103.8" width="229.4" height="130.4" fill="none" stroke="#d6d6d6" stroke-width="1.7"/>
<g clip-path="url(#outimg)">
<g fill="none" stroke="#0c0c0c" stroke-width="3.4">
 <circle cx="197.5" cy="104.5" r="2.4"/><circle cx="311.5" cy="104.5" r="2.4"/><circle cx="425.5" cy="104.5" r="2.4"/>
 <circle cx="197.5" cy="169" r="2.4"/><circle cx="425.5" cy="169" r="2.4"/>
 <circle cx="197.5" cy="233.5" r="2.4"/><circle cx="311.5" cy="233.5" r="2.4"/><circle cx="425.5" cy="233.5" r="2.4"/>
</g>
<g fill="#0c0c0c" stroke="#dcdcdc" stroke-width="1.4">
 <circle cx="197.5" cy="104.5" r="2.4"/><circle cx="311.5" cy="104.5" r="2.4"/><circle cx="425.5" cy="104.5" r="2.4"/>
 <circle cx="197.5" cy="169" r="2.4"/><circle cx="425.5" cy="169" r="2.4"/>
 <circle cx="197.5" cy="233.5" r="2.4"/><circle cx="311.5" cy="233.5" r="2.4"/><circle cx="425.5" cy="233.5" r="2.4"/>
</g>
</g>
</svg>
<div class="a" style="left:259.8px;top:108px;font-size:18.6px;line-height:20px;color:#e2e6ee;letter-spacing:-0.55px;-webkit-text-stroke:0.2px #0f3f66;text-shadow:0 0 1px #021838">Share Quickly</div>

<div class="a lbl" style="left:688.5px;top:268.5px;font-size:8.4px;letter-spacing:-.2px">Properties</div>
<div class="a lbl" style="left:637px;top:326px;font-size:8px;letter-spacing:-.15px">Color</div>
<div class="a lbl" style="left:676.5px;top:326px;font-size:8px;letter-spacing:-.15px">Shadow</div>
<div class="a lbl" style="left:720px;top:326px;font-size:8px;letter-spacing:-.15px">Shape</div>
<div class="a lbl" style="left:771px;top:326px;font-size:8px;letter-spacing:-.15px">Font</div>
<div class="a" style="left:765.5px;top:280.5px;font-family:'Liberation Serif';font-size:45px;line-height:50px;color:#f4f4f4;text-shadow:0 0 1px #000">T</div>
<div class="a lbl" style="left:600px;width:72px;text-align:right;letter-spacing:-.15px;top:348px">Opacity:</div>
<div class="a lbl" style="left:600px;width:72px;text-align:right;letter-spacing:-.15px;top:364.5px">Line style:</div>
<div class="a lbl" style="left:600px;width:72px;text-align:right;letter-spacing:-.15px;top:383px">Line width:</div>
<div class="a lbl" style="left:600px;width:72px;text-align:right;letter-spacing:-.15px;top:399.5px">Padding:</div>
<div class="a lbl" style="left:760px;width:30px;text-align:right;top:348.5px;font-size:7px">100%</div>
<div class="a lbl" style="left:760px;width:30px;text-align:right;top:383.3px;font-size:7px">5pt</div>
<div class="a lbl" style="left:760px;width:30px;text-align:right;top:399.8px;font-size:7px">0pt</div>

<div class="a lbl" style="left:86.8px;top:332px;font-size:7px;line-height:8px;letter-spacing:-.1px;color:#ddd">341 x 194</div>
<div class="a lbl" style="left:85.2px;top:340.5px;font-size:7px;line-height:8px;letter-spacing:-.15px;color:#ddd;word-spacing:.3px">x 191, y 14</div>
<div class="a" style="left:57px;top:399.5px;font-size:8px;line-height:9px;font-weight:bold;color:#e0e0e0">00:17 mp4</div>
<div class="a" style="left:116px;top:369.2px;width:88.6px;height:34.8px;overflow:hidden">
 <div class="a" style="left:21px;top:-7px;font-size:10px;letter-spacing:-.3px;line-height:12px;color:#444">U.S. Dollars <span style="font-size:6px">&#9660;</span></div>
 <div class="a" style="left:13.5px;top:11px;font-size:10px;letter-spacing:-.3px;line-height:12px;color:#222"><span style="font-size:8px;letter-spacing:0">&#10004;</span>U.S. Dollars</div>
 <div class="a" style="left:21px;top:27px;font-size:10px;letter-spacing:-.3px;line-height:12px;color:#333">Pounds</div>
</div>


<div class="a" style="left:549px;top:362.5px;font-size:7.2px;line-height:9px;color:#c0cedc;-webkit-text-stroke:.15px #0f3f66">Share Quickly</div>
<div class="a" style="left:267px;top:367.8px;font-size:5.4px;line-height:5.8px;letter-spacing:-.05px;color:#d0d0d0;opacity:.85">See how Snagit<br>&nbsp;&nbsp;&nbsp;&nbsp;&nbsp;can help you</div>
</body></html>
